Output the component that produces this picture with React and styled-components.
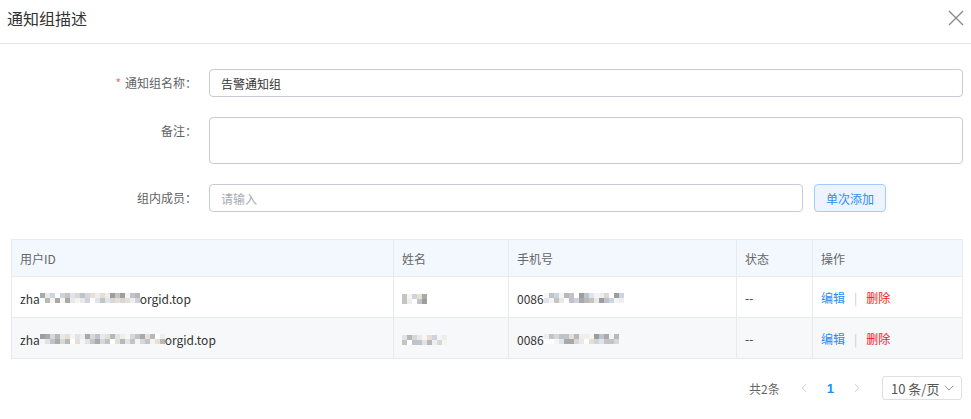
import styled, { createGlobalStyle } from "styled-components"
import { ChevronDown, ChevronLeft, ChevronRight } from "lucide-react"

const GlobalStyle = createGlobalStyle`
    body {
        margin: 0;
        background: #fff;
        font-family: "Microsoft YaHei", "Noto Sans CJK SC", "Liberation Sans", sans-serif;
        color: #333;
    }
`

const Dialog = styled.div`
    width: 971px;
    height: 419px;
    background: #fff;
    overflow: hidden;
`

const Header = styled.div`
    display: flex;
    justify-content: space-between;
    align-items: center;
    padding: 8px 5px 15px 7px;
    border-bottom: 1px solid #e5e5e5;
`

const Title = styled.h3`
    margin: 0;
    font-size: 16px;
    font-weight: 400;
    line-height: 20px;
    color: #333;
`

const CloseButton = styled.button`
    border: none;
    background: none;
    padding: 0;
    width: 20px;
    height: 20px;
    display: flex;
    align-items: center;
    justify-content: center;
    cursor: pointer;
`

const Body = styled.div`
    padding: 25px 8px 0 11px;
`

const Form = styled.div`
    display: flex;
    flex-direction: column;
    gap: 20px;
`

const FormRow = styled.div`
    display: grid;
    grid-template-columns: 198px 1fr;
    align-items: start;
`

const Label = styled.label`
    font-size: 12px;
    line-height: 28px;
    color: #606266;
    text-align: right;
    padding-right: 12px;
    white-space: nowrap;
`

const Required = styled.span`
    color: #f56c6c;
    margin-right: 4px;
`

const Control = styled.div`
    display: flex;
    gap: 11px;
    padding-right: ${p => p.$pr || 0}px;
`

const Input = styled.input`
    flex: 1;
    box-sizing: border-box;
    height: 28px;
    border: 1px solid #c8cbd4;
    border-radius: 4px;
    padding: 0 11px;
    font-size: 12px;
    font-family: inherit;
    color: #333;
    outline: none;
    &::placeholder {
        color: #a8abb2;
    }
`

const TextArea = styled.textarea`
    flex: 1;
    box-sizing: border-box;
    height: 47px;
    border: 1px solid #c8cbd4;
    border-radius: 4px;
    padding: 5px 11px;
    font-family: inherit;
    resize: none;
    outline: none;
`

const AddButton = styled.button`
    width: 72px;
    height: 28px;
    border: 1px solid #a3cdf9;
    border-radius: 4px;
    background: #ecf5ff;
    color: #2d8cf0;
    font-size: 12px;
    font-family: inherit;
    cursor: pointer;
`

const Table = styled.table`
    margin-top: 27px;
    width: 951px;
    border-collapse: collapse;
    table-layout: fixed;
    font-size: 12px;
    border: 1px solid #e8eaec;
`

const Th = styled.th`
    height: 36px;
    padding: 0 8px;
    background: #f3f8fe;
    font-weight: 400;
    color: #666;
    text-align: left;
    border: 1px solid #e8eaec;
`

const Tr = styled.tr`
    background: ${p => (p.$striped ? "#f7f8fa" : "#fff")};
`

const Td = styled.td`
    height: 40px;
    padding: 0 8px;
    color: #333;
    border: 1px solid #e8eaec;
    white-space: nowrap;
    overflow: hidden;
`

const Cell = styled.span`
    display: inline-flex;
    align-items: center;
    vertical-align: middle;
`

const MosaicGrid = styled.span`
    display: inline-grid;
    grid-template-columns: repeat(${p => p.$cols}, 5px);
    grid-auto-rows: 5px;
`

const Block = styled.span`
    display: block;
`

const Link = styled.a`
    color: ${p => (p.$danger ? "#f01a1a" : "#2d8cf0")};
    cursor: pointer;
`

const Divider = styled.span`
    color: #c9c9c9;
    margin: 0 9px;
`

const Pager = styled.div`
    display: flex;
    justify-content: flex-end;
    align-items: center;
    margin-top: 17px;
    font-size: 12px;
    color: #666;
`

const Total = styled.span`
    margin-right: 11px;
`

const PageArrow = styled.span`
    display: flex;
    color: #c0c4cc;
    padding: 0 6px;
`

const PageNumber = styled.span`
    color: #1890ff;
    font-weight: 700;
    font-family: "Liberation Sans", sans-serif;
    font-size: 13px;
    margin: 0 10px;
`

const SizeSelect = styled.div`
    display: flex;
    align-items: center;
    justify-content: space-between;
    box-sizing: border-box;
    width: 80px;
    height: 24px;
    margin-left: 12px;
    margin-right: 1px;
    padding: 0 4px 0 8px;
    border: 1px solid #dcdfe6;
    border-radius: 3px;
    font-size: 13px;
    color: #555;
`

const palette = ["#d8d8d8", "#c4c4c4", "#eeeeee", "#b8b8b8", "#f4f4f4", "#a9a9a9", "#dfe3ec", "#cdd3df", "#e6e0d4", "#bfc3cc", "#9d9d9d", "#f7f5f0", "#ffffff", "#e9e9e9"]

const Mosaic = ({ cols, seed }) => {
    const blocks = []
    for (let i = 0; i < cols * 2; i++) {
        blocks.push(palette[(i * 7 + seed * 5 + (i % 3) * seed + Math.floor(i / 4)) % palette.length])
    }
    return (
        <MosaicGrid $cols={cols}>
            {blocks.map((c, i) => (
                <Block key={i} style={{ background: c }} />
            ))}
        </MosaicGrid>
    )
}

const members = [
    { idCols: 20, nameCols: 5, phoneCols: 16 },
    { idCols: 25, nameCols: 9, phoneCols: 15 },
]

const App = () => {
    return (
        <Dialog>
            <GlobalStyle />
            <Header>
                <Title>通知组描述</Title>
                <CloseButton aria-label="close">
                    <svg width="16" height="16" viewBox="0 0 16 16">
                        <path d="M1 1 L15 15 M15 1 L1 15" stroke="#8c8c8c" strokeWidth="1.4" fill="none" />
                    </svg>
                </CloseButton>
            </Header>
            <Body>
                <Form>
                    <FormRow>
                        <Label><Required>*</Required>通知组名称：</Label>
                        <Control>
                            <Input defaultValue="告警通知组" />
                        </Control>
                    </FormRow>
                    <FormRow>
                        <Label>备注：</Label>
                        <Control>
                            <TextArea />
                        </Control>
                    </FormRow>
                    <FormRow>
                        <Label>组内成员：</Label>
                        <Control $pr={77}>
                            <Input placeholder="请输入" />
                            <AddButton>单次添加</AddButton>
                        </Control>
                    </FormRow>
                </Form>
                <Table>
                    <colgroup>
                        <col style={{ width: 382 }} />
                        <col style={{ width: 115 }} />
                        <col style={{ width: 228 }} />
                        <col style={{ width: 76 }} />
                        <col style={{ width: 150 }} />
                    </colgroup>
                    <thead>
                        <tr>
                            <Th>用户ID</Th>
                            <Th>姓名</Th>
                            <Th>手机号</Th>
                            <Th>状态</Th>
                            <Th>操作</Th>
                        </tr>
                    </thead>
                    <tbody>
                        {members.map((m, i) => (
                            <Tr key={i} $striped={i % 2 === 1}>
                                <Td>
                                    <Cell>zha<Mosaic cols={m.idCols} seed={i + 1} />orgid.top</Cell>
                                </Td>
                                <Td>
                                    <Cell><Mosaic cols={m.nameCols} seed={i + 3} /></Cell>
                                </Td>
                                <Td>
                                    <Cell>0086<Mosaic cols={m.phoneCols} seed={i + 5} /></Cell>
                                </Td>
                                <Td>--</Td>
                                <Td>
                                    <Link>编辑</Link>
                                    <Divider>|</Divider>
                                    <Link $danger>删除</Link>
                                </Td>
                            </Tr>
                        ))}
                    </tbody>
                </Table>
                <Pager>
                    <Total>共2条</Total>
                    <PageArrow><ChevronLeft size={14} strokeWidth={1.5} /></PageArrow>
                    <PageNumber>1</PageNumber>
                    <PageArrow><ChevronRight size={14} strokeWidth={1.5} /></PageArrow>
                    <SizeSelect>
                        10 条/页
                        <ChevronDown size={16} strokeWidth={1.3} color="#888" />
                    </SizeSelect>
                </Pager>
            </Body>
        </Dialog>
    )
}

export default App
